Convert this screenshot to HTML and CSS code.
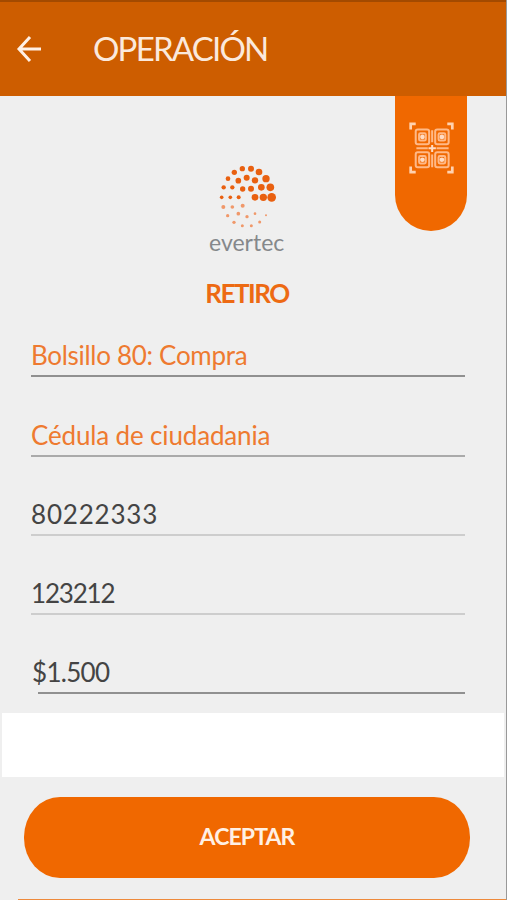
FILE: index.html
```html
<!DOCTYPE html>
<html lang="es">
<head>
	<meta charset="utf-8">
	<meta name="viewport" content="width=device-width, initial-scale=1">
	<title>Operación</title>
	<link rel="stylesheet" href="styles.css">
</head>
<body>
	<div class="screen">
		<header class="header">
			<svg class="back" viewBox="0 0 26 28">
				<path d="M25 14H4M14 2L3 14L14 26"></path>
			</svg>
			<h1 class="title">OPERACIÓN</h1>
		</header>

		<main class="content">
			<div class="qr-tab">
				<svg class="qr" viewBox="0 0 134 154">
					<g class="corners">
						<path d="M5 22V5H20M114 5H129V22M5 132V149H20M114 149H129V132"></path>
					</g>
					<g class="cells">
						<rect x="20" y="22" width="40" height="44" rx="6"></rect>
						<rect x="78" y="22" width="40" height="44" rx="6"></rect>
						<rect x="20" y="90" width="40" height="44" rx="6"></rect>
						<rect x="78" y="90" width="40" height="44" rx="6"></rect>
						<rect x="30" y="33" width="20" height="22" rx="4"></rect>
						<rect x="88" y="33" width="20" height="22" rx="4"></rect>
						<rect x="30" y="101" width="20" height="22" rx="4"></rect>
						<rect x="88" y="101" width="20" height="22" rx="4"></rect>
						<path d="M22 78H56M82 78H118M69 24V60M69 96V134"></path>
					</g>
					<g class="marks">
						<circle cx="40" cy="44" r="7"></circle>
						<circle cx="98" cy="44" r="7"></circle>
						<circle cx="40" cy="112" r="7"></circle>
						<circle cx="98" cy="112" r="7"></circle>
						<path d="M66 68h6v7h8v6h-8v8h-6v-8h-8v-6h8z"></path>
					</g>
				</svg>
			</div>

			<div class="brand">
				<svg class="logo" viewBox="0 0 360 240">
					<circle cx="157" cy="56" r="8"></circle>
					<circle cx="183" cy="56" r="9"></circle>
					<circle cx="133" cy="67" r="8"></circle>
					<circle cx="207" cy="66" r="10"></circle>
					<circle cx="114" cy="86" r="7"></circle>
					<circle cx="145" cy="92" r="8.5"></circle>
					<circle cx="170" cy="83" r="9"></circle>
					<circle cx="195" cy="91" r="9.5"></circle>
					<circle cx="228" cy="86" r="11"></circle>
					<circle cx="101" cy="112" r="6.5"></circle>
					<circle cx="127" cy="112" r="6.5"></circle>
					<circle cx="158" cy="117" r="8"></circle>
					<circle cx="183" cy="116" r="9"></circle>
					<circle cx="214" cy="112" r="10"></circle>
					<circle cx="241" cy="112" r="11.5"></circle>
					<circle cx="95" cy="142" r="5.5"></circle>
					<circle cx="121" cy="142" r="5.5"></circle>
					<circle cx="146" cy="142" r="6"></circle>
					<circle cx="195" cy="142" r="10"></circle>
					<circle cx="220" cy="142" r="11"></circle>
					<circle cx="245" cy="142" r="13"></circle>
					<g class="faded">
						<circle cx="100" cy="171" r="6"></circle>
						<circle cx="127" cy="171" r="5.5"></circle>
						<circle cx="158" cy="167" r="6"></circle>
						<circle cx="113" cy="197" r="5"></circle>
						<circle cx="145" cy="191" r="5.5"></circle>
						<circle cx="171" cy="200" r="5"></circle>
						<circle cx="195" cy="191" r="4"></circle>
						<circle cx="228" cy="196" r="3"></circle>
						<circle cx="132" cy="217" r="5"></circle>
						<circle cx="157" cy="227" r="4.5"></circle>
						<circle cx="184" cy="227" r="4.5"></circle>
						<circle cx="209" cy="216" r="4.5"></circle>
					</g>
				</svg>
				<div class="brand-name">evertec</div>
			</div>

			<h2 class="operation">RETIRO</h2>

			<div class="form">
				<div class="field select first"><span class="pocket">Bolsillo 80: Compra</span></div>
				<div class="field select mid"><span class="doc-type">Cédula de ciudadania</span></div>
				<div class="field light"><span class="doc-number">80222333</span></div>
				<div class="field light"><span class="code">123212</span></div>
				<div class="field amount"><span class="value">$1.500</span></div>
			</div>
		</main>

		<div class="gap"></div>

		<footer class="footer">
			<button type="button" class="accept">ACEPTAR</button>
			<div class="next-edge"></div>
		</footer>
	</div>
</body>
</html>
```

FILE: styles.css
```css
* {
	box-sizing: border-box;
}

body {
	margin: 0;
	background-color: #efefef;
	font-family: Lato, "Liberation Sans", sans-serif;
}

.screen {
	display: flex;
	flex-direction: column;
	width: 507px;
	height: 900px;
	overflow: hidden;
	border-right: 1px solid #999;
	background-color: #efefef;
}

/* header */
.header {
	display: flex;
	align-items: center;
	height: 96px;
	padding-left: 16px;
	border-top: 2px solid #a34a00;
	background-color: #cd5d00;
	color: #fbe9dc;
}

.back {
	width: 26px;
	height: 28px;
	fill: none;
	stroke: #fff0e6;
	stroke-width: 3;
}

.title {
	margin: -2px 0 0 51px;
	font-size: 33px;
	font-weight: 400;
	line-height: 40px;
	letter-spacing: -1.8px;
}

/* content */
.content {
	position: relative;
	height: 617px;
	padding-top: 54px;
}

.qr-tab {
	position: absolute;
	top: 0;
	right: 39px;
	width: 72px;
	height: 135px;
	padding: 26px 0 0 14px;
	border-radius: 0 0 36px 36px;
	background-color: #f06800;
}

.qr {
	display: block;
	width: 45px;
	height: 52px;
	fill: none;
	stroke: #ffb987;
}

.corners {
	stroke: #ffd2b0;
	stroke-width: 8;
}

.cells {
	stroke-width: 6;
}

.marks {
	fill: #ffdcc4;
	stroke: none;
}

.brand {
	width: 120px;
	margin-left: 190px;
}

.logo {
	display: block;
	width: 120px;
	height: 80px;
	fill: #e96010;
}

.faded {
	fill: #f0986a;
}

.brand-name {
	height: 28px;
	padding-left: 19px;
	color: #85888b;
	font-size: 23px;
	line-height: 24px;
}

.operation {
	width: 494px;
	margin: 19px 0 0;
	color: #ed6a13;
	font-size: 26px;
	font-weight: 700;
	line-height: 32px;
	letter-spacing: -1.5px;
	text-align: center;
}

.form {
	padding: 29px 41px 0 31px;
}

.field {
	height: 39px;
	margin-bottom: 40px;
	border-bottom: 2px solid #909090;
	color: #444;
	font-size: 26px;
	line-height: 34px;
	white-space: nowrap;
}

.first {
	margin-bottom: 41px;
}

.select {
	color: #ee7a30;
}

.mid {
	border-bottom-color: #aaa;
}

.light {
	border-bottom-color: #cdcdcd;
}

.pocket {
	letter-spacing: -0.3px;
}

.doc-type {
	letter-spacing: -0.15px;
}

.doc-number {
	letter-spacing: 0.8px;
}

.code {
	letter-spacing: -1.2px;
}

.amount {
	margin-left: 7px;
}

.value {
	margin-left: -6px;
	letter-spacing: -0.7px;
}

.gap {
	height: 64px;
	margin: 0 2px;
	background-color: #fff;
}

/* footer */
.footer {
	height: 123px;
	padding: 20px 0 0 24px;
}

.accept {
	display: block;
	width: 446px;
	height: 81px;
	padding: 0 0 4px;
	border: none;
	border-radius: 36px / 40px;
	background-color: #f06800;
	color: #fff0e4;
	font-family: inherit;
	font-size: 23px;
	font-weight: 700;
	letter-spacing: -0.9px;
}

.next-edge {
	height: 2px;
	margin: 21px 0 0 -6px;
	background-color: #ee8a3c;
}
```
